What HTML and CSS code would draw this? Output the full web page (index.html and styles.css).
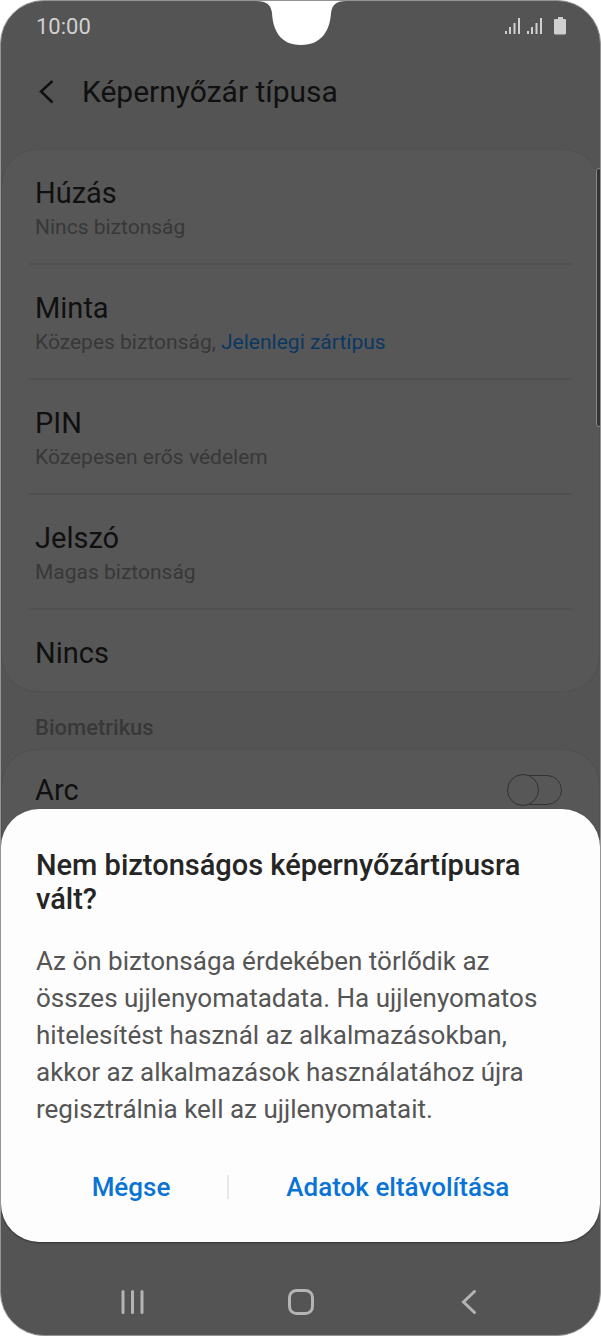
FILE: index.html
```html
<!DOCTYPE html>
<html lang="hu">
<head>
    <meta charset="UTF-8">
    <meta name="viewport" content="width=device-width, initial-scale=1.0">
    <title>Képernyőzár típusa</title>
    <link rel="stylesheet" href="styles.css">
</head>
<body>
    <div class="phone">
        <!-- camera cutout -->
        <svg class="notch" width="90" height="46" viewBox="0 0 90 46" aria-hidden="true">
            <path d="M0 0 H90 V1 C80 1 76 5 75 13 C74 30 66 45 45 45 C24 45 17 30 16 13 C15 5 11 1 0 1 Z" fill="#fff"/>
        </svg>

        <div class="status-bar">
            <span>10:00</span>
            <svg width="62" height="20" viewBox="0 0 62 20" aria-hidden="true">
                <g stroke="#d0d0d0" stroke-width="2">
                    <path d="M1 15V18M5 11V18M9.500 7V18M14 2V18"/>
                    <path d="M23 15V18M27 11V18M31.500 7V18M36 2V18"/>
                </g>
                <path d="M53 1h5v2h2a1 1 0 0 1 1 1v13a1.500 1.500 0 0 1-1.500 1.500h-9a1.500 1.500 0 0 1-1.500-1.500V4a1 1 0 0 1 1-1h3z" fill="#d0d0d0"/>
            </svg>
        </div>

        <header class="header">
            <button class="back" aria-label="Vissza">
                <svg width="16" height="24" viewBox="0 0 16 24" aria-hidden="true">
                    <path d="M14.500 1L3 11.500L14.500 22.500" fill="none" stroke="#101010" stroke-width="2.500"/>
                </svg>
            </button>
            <h1>Képernyőzár típusa</h1>
        </header>

        <main class="settings">
            <div class="card">
                <button class="row">
                    <span class="row-title">Húzás</span>
                    <span class="row-text">Nincs biztonság</span>
                </button>
                <button class="row">
                    <span class="row-title">Minta</span>
                    <span class="row-text">Közepes biztonság, <span class="current">Jelenlegi zártípus</span></span>
                </button>
                <button class="row">
                    <span class="row-title">PIN</span>
                    <span class="row-text">Közepesen erős védelem</span>
                </button>
                <button class="row">
                    <span class="row-title">Jelszó</span>
                    <span class="row-text">Magas biztonság</span>
                </button>
                <button class="row">
                    <span class="row-title">Nincs</span>
                </button>
            </div>

            <h2>Biometrikus</h2>
            <div class="card card-last">
                <div class="switch-row">
                    <label class="row-title" for="face">Arc</label>
                    <input class="switch" type="checkbox" id="face">
                </div>
            </div>
        </main>
        <div class="scrollbar"></div>

        <div class="dialog" role="dialog" aria-labelledby="dialog-title">
            <h2 id="dialog-title">Nem biztonságos képernyőzártípusra vált?</h2>
            <p>Az ön biztonsága érdekében törlődik az összes ujjlenyomatadata. Ha ujjlenyomatos hitelesítést használ az alkalmazásokban, akkor az alkalmazások használatához újra regisztrálnia kell az ujjlenyomatait.</p>
            <div class="actions">
                <button class="cancel">Mégse</button>
                <span class="divider"></span>
                <button class="remove">Adatok eltávolítása</button>
            </div>
        </div>

        <nav class="nav-bar">
            <button aria-label="Legutóbbiak">
                <svg width="26" height="26" viewBox="0 0 26 26" aria-hidden="true">
                    <path d="M3 2.500V23.500M12.500 2.500V23.500M22 2.500V23.500" stroke="#b4b4b4" stroke-width="3" stroke-linecap="round"/>
                </svg>
            </button>
            <button aria-label="Kezdőképernyő">
                <svg width="26" height="26" viewBox="0 0 26 26" aria-hidden="true">
                    <rect x="1.500" y="1.500" width="23" height="23" rx="7" fill="none" stroke="#b4b4b4" stroke-width="3"/>
                </svg>
            </button>
            <button aria-label="Vissza">
                <svg width="26" height="26" viewBox="0 0 26 26" aria-hidden="true">
                    <path d="M18.500 2.500L7.500 13L18.500 23.500" fill="none" stroke="#b4b4b4" stroke-width="3" stroke-linecap="round"/>
                </svg>
            </button>
        </nav>
    </div>
</body>
</html>
```
FILE: styles.css
```css
*, *::before {
    box-sizing: border-box;
}
body {
    margin: 0;
    background-color: #fff;
    font-family: Roboto, sans-serif;
}
h1, h2, p {
    margin: 0;
}
button {
    font-family: inherit;
    background: none;
    border: none;
    padding: 0;
    cursor: pointer;
}
svg {
    display: block;
}
.phone {
    position: relative;
    display: flex;
    flex-direction: column;
    min-height: 100vh;
    background-color: #545454;
    border: 1px solid #959595;
    border-radius: 44px;
    overflow: hidden;
}
.notch {
    position: absolute;
    top: -1px;
    left: 50%;
    margin-left: -45px;
}
.status-bar {
    display: flex;
    justify-content: space-between;
    align-items: center;
    height: 50px;
    padding: 0 33px 0 35px;
    color: #d0d0d0;
    font-size: 22px;
}
.header {
    display: flex;
    align-items: center;
    gap: 28px;
    height: 81px;
    padding-left: 37px;
}
.header h1 {
    color: #101010;
    font-size: 30px;
    font-weight: 400;
}
.settings {
    flex: 1;
    padding-top: 17px;
}
.card {
    padding: 0 27px;
    background-color: #575757;
    border: 1px solid #505050;
    border-radius: 36px;
}
.row {
    display: block;
    width: 100%;
    padding: 25px 6px 20px;
    text-align: left;
    border-bottom: 2px solid #505050;
}
.row:last-child {
    border-bottom: none;
}
.row-title {
    display: block;
    color: #101010;
    font-size: 29px;
    line-height: 36px;
}
.row-text {
    display: block;
    color: #383838;
    font-size: 21px;
    line-height: 32px;
}
.current {
    color: #0c3763;
}
.settings h2 {
    padding: 21px 34px 7px;
    color: #383838;
    font-size: 22px;
    font-weight: 500;
    line-height: 29px;
}
.card-last {
    border-bottom: none;
    border-radius: 36px 36px 0 0;
}
.switch-row {
    display: flex;
    justify-content: space-between;
    align-items: center;
    padding: 22px 10px 24px 6px;
}
.switch {
    appearance: none;
    position: relative;
    width: 50px;
    height: 30px;
    margin: 0;
    border: 1px solid #333;
    border-radius: 15px;
}
.switch::before {
    content: "";
    position: absolute;
    top: -2px;
    left: -6px;
    width: 32px;
    height: 32px;
    background-color: #575757;
    border: 1px solid #333;
    border-radius: 50%;
}
.switch:checked::before {
    left: 22px;
}
.scrollbar {
    position: absolute;
    top: 167px;
    right: -2px;
    width: 6px;
    height: 259px;
    background-color: #333;
    border: 1px solid #888;
    border-radius: 4px;
}
.dialog {
    position: absolute;
    left: 0;
    right: 0;
    bottom: 93px;
    padding: 39px 35px 28px;
    background-color: #fdfdfd;
    border-radius: 38px;
    box-shadow: 0 1px 2px rgba(0, 0, 0, 0.4);
}
.dialog h2 {
    color: #252525;
    font-size: 29px;
    font-weight: 500;
    line-height: 34px;
}
.dialog p {
    margin-top: 27px;
    padding-right: 20px;
    color: #555;
    font-size: 26px;
    line-height: 37px;
}
.actions {
    display: flex;
    justify-content: center;
    align-items: center;
    gap: 57px;
    margin-top: 32px;
}
.actions button {
    color: #0a73d6;
    font-size: 26px;
    font-weight: 500;
    line-height: 54px;
}
.divider {
    width: 2px;
    height: 24px;
    background-color: #e8e8e8;
}
.nav-bar {
    display: flex;
    justify-content: center;
    gap: 142px;
    padding: 20px 0;
}
```
